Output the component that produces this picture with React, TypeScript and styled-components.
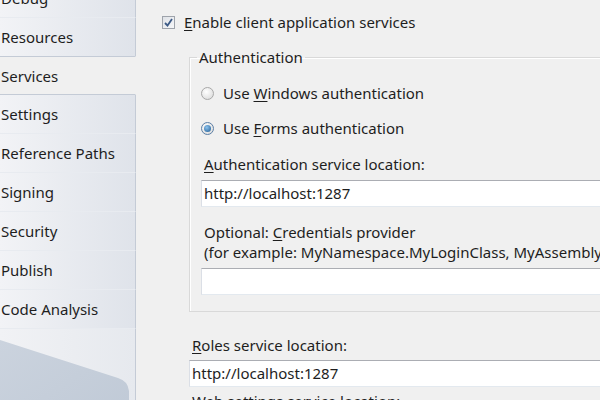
import styled, { createGlobalStyle } from 'styled-components'

const GlobalStyle = createGlobalStyle`
  html, body {
    margin: 0;
    padding: 0;
    background: #f0f0f0;
  }
  body {
    font-family: 'Noto Sans', 'Open Sans', sans-serif;
    font-size: 15px;
    color: #1e1e1e;
  }
`

const StyledPage = styled.div`
  width: 600px;
  height: 400px;
  display: flex;
  overflow: hidden;
`

const StyledSidebar = styled.div`
  width: 136px;
  flex: none;
  display: flex;
  flex-direction: column;
  margin-top: -21px;
`

const StyledTab = styled.div<{ $selected?: boolean }>`
  height: 39px;
  flex: none;
  box-sizing: border-box;
  display: flex;
  align-items: center;
  padding-left: 1px;
  white-space: nowrap;
  background: ${(p) =>
    p.$selected ? '#f0f0f0' : 'linear-gradient(to right, #f2f3f6, #dfe3ea)'};
  border-right: 1px solid ${(p) => (p.$selected ? 'transparent' : '#c4cbd6')};
  border-bottom: 1px solid ${(p) => (p.$selected ? '#c4cbd6' : '#e8ebf0')};
  border-top: ${(p) => (p.$selected ? '1px solid #c4cbd6' : 'none')};
  margin-top: ${(p) => (p.$selected ? '-1px' : '0')};
`

const StyledFiller = styled.div`
  flex: 1 0 auto;
  min-height: 100px;
  background: linear-gradient(to right, #f1f2f5, #e6e9ee);
  border-right: 1px solid #c4cbd6;
  svg {
    display: block;
  }
`

const StyledContent = styled.div`
  flex: 1;
  padding: 12px 0 0 26px;
  min-width: 0;
`

const StyledRow = styled.div<{ $indent?: number; $top?: number }>`
  display: flex;
  align-items: center;
  gap: 9px;
  height: 20px;
  line-height: 20px;
  white-space: nowrap;
  margin-left: ${(p) => p.$indent ?? 0}px;
  margin-top: ${(p) => p.$top ?? 0}px;
`

const StyledLabel = styled.div<{ $indent?: number; $top?: number }>`
  line-height: 20px;
  white-space: nowrap;
  margin-left: ${(p) => p.$indent ?? 0}px;
  margin-top: ${(p) => p.$top ?? 0}px;
`

const StyledKey = styled.span`
  text-decoration: underline;
  text-underline-offset: 2px;
`

const StyledCheckbox = styled.span`
  width: 13px;
  height: 13px;
  box-sizing: border-box;
  border: 1px solid #9ea3ab;
  background: linear-gradient(135deg, #dfe2e7, #f6f7f9);
  display: flex;
  align-items: center;
  justify-content: center;
  flex: none;
`

const StyledRadio = styled.span<{ $checked?: boolean }>`
  width: 13px;
  height: 13px;
  box-sizing: border-box;
  border-radius: 50%;
  border: 1px solid ${(p) => (p.$checked ? '#5c7fa6' : '#a8a8a8')};
  background: radial-gradient(circle at 40% 35%, #ffffff, #d6d6d6);
  display: flex;
  align-items: center;
  justify-content: center;
  flex: none;
  &::after {
    content: '';
    display: ${(p) => (p.$checked ? 'block' : 'none')};
    width: 7px;
    height: 7px;
    border-radius: 50%;
    background: radial-gradient(circle at 40% 35%, #8cc3ee, #1e5a92);
  }
`

const StyledGroup = styled.fieldset`
  margin: 15px 0 0 27px;
  padding: 0 0 16px 11px;
  width: 460px;
  border: 1px solid #d9d9d9;
  box-shadow: inset 1px 1px 0 #ffffff;
  min-width: 0;
`

const StyledLegend = styled.legend`
  padding: 0 2px;
  margin-left: -4px;
  line-height: 20px;
`

const StyledInput = styled.div<{ $indent?: number; $top?: number }>`
  height: 27px;
  box-sizing: border-box;
  width: 520px;
  background: #ffffff;
  border: 1px solid #e3e9ef;
  border-top-color: #abadb3;
  border-left-color: #dbdfe6;
  padding-left: 2px;
  line-height: 25px;
  white-space: nowrap;
  margin-left: ${(p) => p.$indent ?? 0}px;
  margin-top: ${(p) => p.$top ?? 0}px;
`

const tabs = [
  'Debug',
  'Resources',
  'Services',
  'Settings',
  'Reference Paths',
  'Signing',
  'Security',
  'Publish',
  'Code Analysis',
]

const App = () => {
  return (
    <>
      <GlobalStyle />
      <StyledPage>
        <StyledSidebar>
          {tabs.map((t) => (
            <StyledTab key={t} $selected={t === 'Services'}>
              {t}
            </StyledTab>
          ))}
          <StyledFiller>
            <svg width="135" height="100" viewBox="0 0 135 100">
              <defs>
                <linearGradient id="wave" x1="0" y1="0" x2="1" y2="1">
                  <stop offset="0" stopColor="#cbd3de" />
                  <stop offset="1" stopColor="#bfc9d6" />
                </linearGradient>
              </defs>
              <path
                d="M0 11 L118 49 Q128 52 129 62 L129 100 L0 100 Z"
                fill="url(#wave)"
              />
            </svg>
          </StyledFiller>
        </StyledSidebar>
        <StyledContent>
          <StyledRow>
            <StyledCheckbox>
              <svg width="9" height="9" viewBox="0 0 9 9">
                <path
                  d="M1 5 L3.5 7.5 L8 1"
                  fill="none"
                  stroke="#3c5a86"
                  strokeWidth="1.8"
                />
              </svg>
            </StyledCheckbox>
            <span>
              <StyledKey>E</StyledKey>nable client application services
            </span>
          </StyledRow>
          <StyledGroup>
            <StyledLegend>Authentication</StyledLegend>
            <StyledRow $top={16}>
              <StyledRadio />
              <span>
                Use <StyledKey>W</StyledKey>indows authentication
              </span>
            </StyledRow>
            <StyledRow $top={15}>
              <StyledRadio $checked />
              <span>
                Use <StyledKey>F</StyledKey>orms authentication
              </span>
            </StyledRow>
            <StyledLabel $indent={3} $top={16}>
              <StyledKey>A</StyledKey>uthentication service location:
            </StyledLabel>
            <StyledInput $top={6}>http://localhost:1287</StyledInput>
            <StyledLabel $indent={3} $top={15}>
              Optional: <StyledKey>C</StyledKey>redentials provider
            </StyledLabel>
            <StyledLabel $indent={3}>
              (for example: MyNamespace.MyLoginClass, MyAssembly)
            </StyledLabel>
            <StyledInput $top={6} />
          </StyledGroup>
          <StyledLabel $indent={30} $top={23}>
            <StyledKey>R</StyledKey>oles service location:
          </StyledLabel>
          <StyledInput $indent={27} $top={5}>
            http://localhost:1287
          </StyledInput>
          <StyledLabel $indent={30} $top={4}>
            Web settings service location:
          </StyledLabel>
        </StyledContent>
      </StyledPage>
    </>
  )
}

export default App
